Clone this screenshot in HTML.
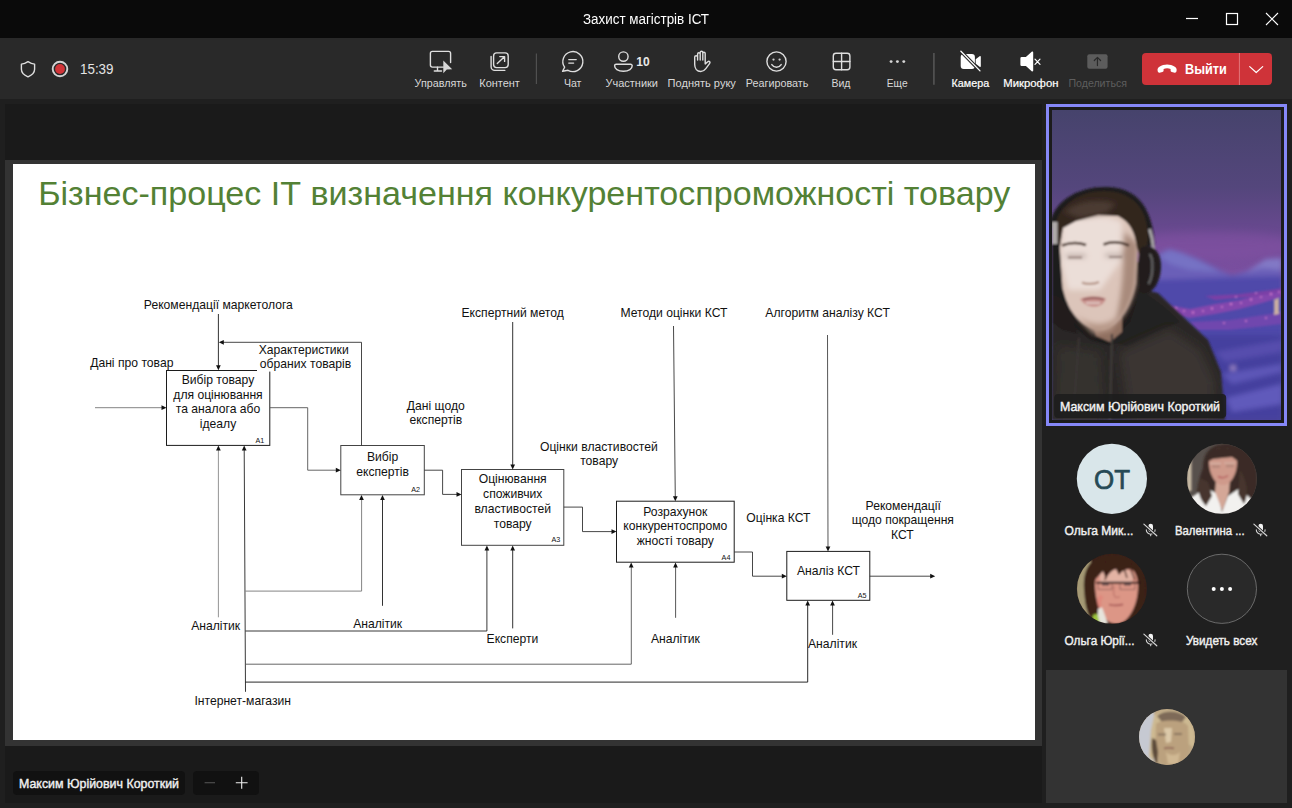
<!DOCTYPE html>
<html lang="ru">
<head>
<meta charset="utf-8">
<title>Захист магістрів ІСТ</title>
<style>
*{box-sizing:border-box;margin:0;padding:0}
html,body{width:1292px;height:808px;overflow:hidden;background:#1f1f1f;font-family:"Liberation Sans",sans-serif;color:#fff}
#titlebar{position:absolute;left:0;top:0;width:1292px;height:38px;background:#0a0a0a}
#toolbar{position:absolute;left:0;top:38px;width:1292px;height:61px;background:#292929}
#stage{position:absolute;left:5px;top:104px;width:1037px;height:699px;background:#1a1a1a}
#frame{position:absolute;left:5px;top:160px;width:1037px;height:586px;background:#333}
#slide{position:absolute;left:13px;top:164px;width:1022px;height:576px;background:#fff;overflow:hidden}
.t{position:absolute;white-space:nowrap;transform-origin:0 50%;line-height:1}
svg{position:absolute;overflow:visible}
.ic{fill:none;stroke:#dedede;stroke-width:1.4;stroke-linecap:round;stroke-linejoin:round}
.chip{position:absolute;background:#111;border-radius:4px}
#side{position:absolute;left:1042px;top:99px;width:250px;height:709px;background:#1f1f1f}
</style>
</head>
<body>
<!-- ===== window title bar ===== -->
<div id="titlebar">
  <div class="t" id="wtitle" style="left:583px;top:12px;font-size:14px;color:#fff;transform:scaleX(.957)">Захист магістрів ІСТ</div>
  <svg width="1292" height="39" style="left:0;top:0">
    <path d="M1186 18.5h12" stroke="#fff" stroke-width="1.2"/>
    <rect x="1226.5" y="13.5" width="11" height="11" fill="none" stroke="#fff" stroke-width="1.2"/>
    <path d="M1266 13l12 12M1278 13l-12 12" stroke="#fff" stroke-width="1.1"/>
  </svg>
</div>

<!-- ===== meeting toolbar ===== -->
<div id="toolbar"></div>
<svg id="tbsvg" width="1292" height="60" viewBox="0 39 1292 60" style="left:0;top:39px" font-family="Liberation Sans, sans-serif">
  <!-- shield -->
  <path class="ic" d="M28 61.6c2.2 1.5 4.3 2.3 6.6 2.5v5.2c0 3.6-2.6 5.9-6.6 7.6c-4-1.7-6.6-4-6.6-7.6v-5.2c2.3-.2 4.4-1 6.6-2.5z" stroke="#e0e0e0" stroke-width="1.1"/>
  <!-- record -->
  <circle cx="60" cy="69" r="7.300" fill="none" stroke="#d4d4d4" stroke-width="1.900"/>
  <circle cx="60" cy="69" r="4.900" fill="#d13438"/>
  <text x="80" y="74" font-size="14" fill="#e4e4e4" textLength="33.500" lengthAdjust="spacingAndGlyphs">15:39</text>

  <!-- Управлять -->
  <g class="ic" stroke="#cfcfcf" stroke-width="1.35">
    <path d="M443.5 67.1H432.4a2 2 0 0 1-2-2V53.4a2 2 0 0 1 2-2H448.6a2 2 0 0 1 2 2V62.5"/>
    <path d="M437.5 67.3V70.8M434.3 71H441.5"/>
  </g>
  <path d="M443.3 60.6L452.2 69.3L446.8 69.5L443.3 73.2Z" fill="#d6d6d6"/>
  <!-- Контент -->
  <g class="ic" stroke="#cfcfcf" stroke-width="1.3">
    <rect x="493.6" y="52.9" width="14.6" height="14.7" rx="3"/>
    <path d="M491.1 56.5V66.8a3.6 3.6 0 0 0 3.6 3.6H504.8"/>
    <path d="M497.3 63.6L504.4 56.7M499.8 56.6H504.6V61.4"/>
  </g>
  <!-- divider -->
  <path d="M536.4 53.5V84" stroke="#505050" stroke-width="1.200"/>
  <!-- Чат -->
  <g class="ic" stroke="#cfcfcf" stroke-width="1.35">
    <path d="M564.6 67.2A10 10 0 1 1 568 70.3L562.6 71.3Z"/>
    <path d="M568.8 59.6H576.2M568.8 63.1H573.6"/>
  </g>
  <!-- Участники -->
  <g class="ic" stroke="#cfcfcf" stroke-width="1.35">
    <circle cx="623.4" cy="56.6" r="4.7"/>
    <path d="M616.2 64.2H630.6a1.6 1.6 0 0 1 1.6 1.6c0 3-3.2 5.5-8.8 5.5s-8.8-2.5-8.8-5.5a1.6 1.6 0 0 1 1.6-1.6z"/>
  </g>
  <text x="636.3" y="65.6" font-size="12" font-weight="700" fill="#e8e8e8" textLength="13.4" lengthAdjust="spacingAndGlyphs">10</text>
  <!-- Поднять руку -->
  <g class="ic" stroke="#cfcfcf" stroke-width="1.25">
    <path d="M694.7 57v7.6c0 3.8 2.3 6.9 6 6.9c2.3 0 3.7-1 5.1-2.9l3.9-5.3c.9-1.2-.6-2.7-1.9-1.6l-2.6 2.2V53.6c0-1.7-2.4-1.7-2.4 0M702.8 60V52.6c0-1.8-2.6-1.8-2.6 0V60M700.2 54c0-1.7-2.6-1.7-2.6 0v6M697.6 57c0-1.7-2.9-1.7-2.9 0"/>
  </g>
  <!-- Реагировать -->
  <g class="ic" stroke="#cfcfcf" stroke-width="1.35">
    <circle cx="776.5" cy="61.5" r="9.6"/>
    <path d="M771.8 64.6c1.2 1.8 2.8 2.7 4.7 2.7s3.500-.9 4.700-2.700"/>
  </g>
  <circle cx="773.5" cy="59.6" r="1.15" fill="#cfcfcf"/><circle cx="779.6" cy="59.6" r="1.15" fill="#cfcfcf"/>
  <!-- Вид -->
  <g class="ic" stroke="#cfcfcf" stroke-width="1.35">
    <rect x="833.3" y="53.2" width="16.600" height="16.600" rx="2.700"/>
    <path d="M841.6 53.2V69.8M833.3 61.5H849.9"/>
  </g>
  <!-- Еще -->
  <g fill="#d6d6d6"><circle cx="891.1" cy="61.6" r="1.45"/><circle cx="897.4" cy="61.6" r="1.45"/><circle cx="903.8" cy="61.6" r="1.45"/></g>
  <!-- divider -->
  <path d="M933.9 53V84.800" stroke="#585858" stroke-width="1.500"/>
  <!-- Камера -->
  <g fill="#fff">
    <rect x="960.7" y="54" width="14.200" height="15" rx="3"/>
    <path d="M975.7 59.200L979.600 56.200c.6-.4 1.200-.1 1.200.6V66.200c0 .7-.6 1-1.200.6L975.7 63.800Z"/>
  </g>
  <path d="M960.900 51.300L980 70.900" stroke="#292929" stroke-width="3.400" stroke-linecap="round"/>
  <path d="M960.900 51.300L980 70.900" stroke="#fff" stroke-width="1.300" stroke-linecap="round"/>
  <!-- Микрофон (speaker muted) -->
  <path d="M1021.600 57h4.300l5.800-5.200c.6-.5 1.500-.1 1.500.7V70.500c0 .8-.9 1.200-1.500.7l-5.800-5.200h-4.300a1.200 1.200 0 0 1-1.200-1.200V58.200a1.200 1.200 0 0 1 1.200-1.200z" fill="#fff"/>
  <path d="M1035 59.200L1040 64.400M1040 59.200L1035 64.400" stroke="#fff" stroke-width="1.200" stroke-linecap="round"/>
  <!-- Поделиться -->
  <rect x="1087.300" y="54.200" width="20.300" height="14.600" rx="2" fill="#5c5c5c"/>
  <path d="M1097.450 65.600V57.600M1094.300 60.500L1097.450 57.400L1100.600 60.500" fill="none" stroke="#2a2a2a" stroke-width="1.200" stroke-linecap="round" stroke-linejoin="round"/>

  <!-- labels -->
  <g font-size="10.900" fill="#d8d8d8" lengthAdjust="spacingAndGlyphs">
    <text x="414.600" y="86.900" textLength="52.200" lengthAdjust="spacingAndGlyphs">Управлять</text>
    <text x="479.300" y="86.900" textLength="40.600" lengthAdjust="spacingAndGlyphs">Контент</text>
    <text x="563.900" y="86.900" textLength="17.600" lengthAdjust="spacingAndGlyphs">Чат</text>
    <text x="605.500" y="86.900" textLength="52.500" lengthAdjust="spacingAndGlyphs">Участники</text>
    <text x="667.600" y="86.900" textLength="68.300" lengthAdjust="spacingAndGlyphs">Поднять руку</text>
    <text x="745.800" y="86.900" textLength="62.500" lengthAdjust="spacingAndGlyphs">Реагировать</text>
    <text x="831.500" y="86.900" textLength="19" lengthAdjust="spacingAndGlyphs">Вид</text>
    <text x="886.800" y="86.900" textLength="20.800" lengthAdjust="spacingAndGlyphs">Еще</text>
    <text x="951.600" y="86.900" textLength="37.600" fill="#fff" stroke="#fff" stroke-width=".2" lengthAdjust="spacingAndGlyphs">Камера</text>
    <text x="1003.300" y="86.900" textLength="55.200" fill="#fff" stroke="#fff" stroke-width=".2" lengthAdjust="spacingAndGlyphs">Микрофон</text>
    <text x="1068.400" y="86.900" textLength="58.600" fill="#5e5e5e" lengthAdjust="spacingAndGlyphs">Поделиться</text>
  </g>

  <!-- leave button -->
  <rect x="1142" y="53" width="130" height="32" rx="4" fill="#cf3339"/>
  <path d="M1239.400 53V85" stroke="#e2777b" stroke-width="1"/>
  <path d="M1157.600 70.600c-.3-1.500.3-2.900 1.800-3.900c4.600-2.900 10.800-2.900 15.400 0c1.500 1 2.100 2.400 1.800 3.900l-.2 1c-.2.800-.9 1.300-1.700 1.100l-2.900-.6c-.7-.2-1.200-.8-1.200-1.500v-1.600c-2.300-.9-4.700-.9-7 0v1.600c0 .7-.5 1.300-1.200 1.500l-2.900.6c-.8.200-1.500-.3-1.700-1.100z" fill="#fff"/>
  <text x="1185" y="73.600" font-size="13.800" font-weight="700" fill="#fff" textLength="41.800" lengthAdjust="spacingAndGlyphs">Выйти</text>
  <path d="M1249.700 66.600L1256.200 72.500L1262.700 66.600" fill="none" stroke="#fff" stroke-width="1.200" stroke-linecap="round" stroke-linejoin="round"/>
</svg>

<!-- ===== stage with shared slide ===== -->
<div id="stage"></div>
<div id="frame"></div>
<div id="slide">
<svg width="1022" height="576" viewBox="13 164 1022 576" style="left:0;top:0" font-family="Liberation Sans, sans-serif">
  <defs>
    <path id="ah" d="M0 0L-5 -2.35L-5 2.35Z"/>
  </defs>
  <text x="38.2" y="205" font-size="34.07" fill="#538135" id="stitle">Бізнес-процес ІТ визначення конкурентоспроможності товару</text>

  <!-- boxes -->
  <g fill="#fff" stroke="#1c1c1c" stroke-width="1">
    <rect x="166.5" y="370.5" width="103.3" height="74.9"/>
    <rect x="340.8" y="445.5" width="83.5" height="49.3" stroke="#444"/>
    <rect x="461.5" y="469.5" width="102.3" height="75.8" stroke="#444"/>
    <rect x="616.5" y="501.2" width="117.7" height="61"/>
    <rect x="786.8" y="551.4" width="83" height="48.9"/>
  </g>
  <rect x="257" y="346" width="96" height="25.6" fill="#fff"/>

  <!-- connectors -->
  <g fill="none" stroke="#1c1c1c" stroke-width=".9">
    <path d="M218.4 314V368"/>
    <path d="M361.5 445.5V342.3H222" stroke="#333"/>
    <path d="M95 407.7H164" stroke="#777"/>
    <path d="M270 407.7H307.7V470.2H338" stroke="#555"/>
    <path d="M424.3 470.2H442.6V494.4H459" stroke="#333"/>
    <path d="M563.8 507.1H582.5V531.6H614" stroke="#333"/>
    <path d="M734.2 552H752.5V576.2H784" stroke="#333"/>
    <path d="M869.8 576.2H932" stroke="#333"/>
    <path d="M512.7 322V467"/>
    <path d="M673.5 326L675.3 499" stroke="#333"/>
    <path d="M827.5 335L828 549" stroke="#444"/>
    <path d="M218.4 617.3V448" stroke="#888"/>
    <path d="M245.5 691.8L244.2 448" stroke="#222"/>
    <path d="M245.3 591.1H361.6V498" stroke="#777"/>
    <path d="M382.5 605.8V498"/>
    <path d="M245.4 631H486.9V548" stroke="#222"/>
    <path d="M512.7 628.4V548"/>
    <path d="M245.5 664.2H631.3V565" stroke="#555"/>
    <path d="M675.6 617.8V565" stroke="#444"/>
    <path d="M245.5 682.1H807.7V603" stroke="#111"/>
    <path d="M832.6 634.8V603" stroke="#333"/>
  </g>
  <!-- arrow heads -->
  <g fill="#111">
    <use href="#ah" transform="translate(218.4 370.3) rotate(90)"/>
    <use href="#ah" transform="translate(218.8 342.3) rotate(180)"/>
    <use href="#ah" transform="translate(166.5 407.7)"/>
    <use href="#ah" transform="translate(340.8 470.2)"/>
    <use href="#ah" transform="translate(461.5 494.4)"/>
    <use href="#ah" transform="translate(616.5 531.6)"/>
    <use href="#ah" transform="translate(786.8 576.2)"/>
    <use href="#ah" transform="translate(935.2 576.2)"/>
    <use href="#ah" transform="translate(512.7 469.5) rotate(90)"/>
    <use href="#ah" transform="translate(675.3 501.2) rotate(90)"/>
    <use href="#ah" transform="translate(828 551.4) rotate(90)"/>
    <use href="#ah" transform="translate(218.4 445.6) rotate(-90)"/>
    <use href="#ah" transform="translate(244.2 445.6) rotate(-90)"/>
    <use href="#ah" transform="translate(361.5 495) rotate(-90)"/>
    <use href="#ah" transform="translate(382.5 495) rotate(-90)"/>
    <use href="#ah" transform="translate(486.9 545.5) rotate(-90)"/>
    <use href="#ah" transform="translate(512.7 545.5) rotate(-90)"/>
    <use href="#ah" transform="translate(631.2 562.4) rotate(-90)"/>
    <use href="#ah" transform="translate(675.5 562.4) rotate(-90)"/>
    <use href="#ah" transform="translate(807.7 600.5) rotate(-90)"/>
    <use href="#ah" transform="translate(832.5 600.5) rotate(-90)"/>
  </g>

  <!-- text -->
  <g font-size="12.15" fill="#111" text-anchor="middle">
    <text x="218" y="384.2">Вибір товару</text>
    <text x="218" y="398.7">для оцінювання</text>
    <text x="218" y="413.3">та аналога або</text>
    <text x="218" y="428.3">ідеалу</text>
    <text x="382.6" y="461.2">Вибір</text>
    <text x="382.6" y="475.9">експертів</text>
    <text x="512.7" y="483.3">Оцінювання</text>
    <text x="512.7" y="498.2">споживчих</text>
    <text x="512.7" y="512.9">властивостей</text>
    <text x="512.7" y="527.6">товару</text>
    <text x="675.3" y="515.5">Розрахунок</text>
    <text x="675.3" y="530.1">конкурентоспромо</text>
    <text x="675.3" y="544.7">жності товару</text>
    <text x="828.5" y="574.6">Аналіз КСТ</text>

    <text x="218.35" y="309.1">Рекомендації маркетолога</text>
    <text x="303.7" y="354">Характеристики</text>
    <text x="305.5" y="368.1">обраних товарів</text>
    <text x="131.8" y="366.9">Дані про товар</text>
    <text x="435.8" y="410.3">Дані щодо</text>
    <text x="435.8" y="424.4">експертів</text>
    <text x="512.65" y="316.6">Експертний метод</text>
    <text x="673.95" y="316.6">Методи оцінки КСТ</text>
    <text x="827.6" y="316.6">Алгоритм аналізу КСТ</text>
    <text x="598.85" y="450.5">Оцінки властивостей</text>
    <text x="599.15" y="465.2">товару</text>
    <text x="778.4" y="521.7">Оцінка КСТ</text>
    <text x="903.2" y="510.2">Рекомендації</text>
    <text x="902.8" y="524.3">щодо покращення</text>
    <text x="902.4" y="538.8">КСТ</text>
    <text x="215.65" y="630.4">Аналітик</text>
    <text x="377.65" y="628.4">Аналітик</text>
    <text x="512.45" y="642.9">Експерти</text>
    <text x="675.45" y="642.9">Аналітик</text>
    <text x="832.5" y="647.9">Аналітик</text>
    <text x="242.7" y="704.8">Інтернет-магазин</text>
  </g>
  <g font-size="7.2" fill="#111" text-anchor="end">
    <text x="264.2" y="442.5">A1</text>
    <text x="420.1" y="492">A2</text>
    <text x="560.2" y="542.3">A3</text>
    <text x="730.4" y="559.5">A4</text>
    <text x="866.6" y="597.7">A5</text>
  </g>
</svg>
</div>

<!-- ===== bottom chips ===== -->
<div class="chip" style="left:13px;top:771px;width:172px;height:24px"></div>
<div class="chip" style="left:193px;top:771px;width:66px;height:24px"></div>

<!-- ===== right side panel ===== -->
<svg id="chipsvg" width="270" height="30" viewBox="0 768 270 30" style="left:0;top:768px" font-family="Liberation Sans, sans-serif">
  <text x="19" y="788.100" font-size="12.800" fill="#f0f0f0" stroke="#f0f0f0" stroke-width=".4" textLength="160" lengthAdjust="spacingAndGlyphs">Максим Юрійович Короткий</text>
  <path d="M204.600 782.700H215" stroke="#4d4d4d" stroke-width="1.200"/>
  <path d="M235.800 782.700H247.600M241.700 776.700V788.700" stroke="#f0f0f0" stroke-width="1.100"/>
</svg>

<div id="side"></div>
<svg id="sidesvg" width="250" height="709" viewBox="1042 99 250 709" style="left:1042px;top:99px" font-family="Liberation Sans, sans-serif">
  <defs>
    <linearGradient id="sky" x1="0" y1="0" x2="0" y2="1">
      <stop offset="0" stop-color="#46436c"/>
      <stop offset=".25" stop-color="#54467c"/>
      <stop offset=".42" stop-color="#6c4993"/>
      <stop offset=".52" stop-color="#7b4fa0"/>
      <stop offset=".62" stop-color="#5a55b0"/>
      <stop offset=".8" stop-color="#4a4a9e"/>
      <stop offset="1" stop-color="#4c4898"/>
    </linearGradient>
    <clipPath id="vclip"><rect x="1052" y="110" width="229" height="310"/></clipPath>
    <filter id="b1" x="-20%" y="-20%" width="140%" height="140%"><feGaussianBlur stdDeviation="1.200"/></filter>
    <filter id="b2" x="-20%" y="-20%" width="140%" height="140%"><feGaussianBlur stdDeviation="2.500"/></filter>
    <filter id="b4" x="-30%" y="-30%" width="160%" height="160%"><feGaussianBlur stdDeviation="5"/></filter>
    <clipPath id="c2"><circle cx="1221.900" cy="478.800" r="35"/></clipPath>
    <clipPath id="c3"><circle cx="1111.900" cy="588.800" r="35"/></clipPath>
    <clipPath id="c4"><circle cx="1167" cy="737" r="28"/></clipPath>
    <g id="micoff">
      <path d="M-2.300 -4a2.300 2.300 0 0 1 4.600 0v3.700a2.300 2.300 0 0 1-4.600 0z" fill="#f2f2f2"/>
      <path d="M-4.400 -.2a4.400 4.400 0 0 0 8.800 0M0 4.200V5.800" fill="none" stroke="#d8d8d8" stroke-width="1.100" stroke-linecap="round"/>
      <path d="M-6.200 -5.400L6.600 6.300" stroke="#1f1f1f" stroke-width="2.800"/>
      <path d="M-6.800 -5.900L6.100 5.800" stroke="#d4d4d4" stroke-width="1.200" stroke-linecap="round"/>
    </g>
  </defs>

  <!-- active speaker tile -->
  <rect x="1047.500" y="105.500" width="238" height="319" fill="#1c1c1c" stroke="#8688f8" stroke-width="3"/>
  <g clip-path="url(#vclip)">
    <rect x="1052" y="110" width="229" height="310" fill="url(#sky)"/>
    <g id="bgscene">
      <!-- far glow -->
      <ellipse cx="1210" cy="246" rx="90" ry="14" fill="#8a55a8" opacity=".45" filter="url(#b4)"/>
      <!-- mountains -->
      <g filter="url(#b2)">
        <path d="M1150 262L1160 253L1169 249L1180 252L1196 258L1212 266L1232 276L1250 270L1266 259L1274 262L1282 258V330H1150Z" fill="#6a5fb8"/>
        <path d="M1158 256L1169 249.500L1182 253L1200 261L1220 272L1190 270L1170 264Z" fill="#7672c4"/>
        <path d="M1246 272L1266 259L1282 258V270L1262 268Z" fill="#8279c6"/>
        <path d="M1150 280L1282 276V340H1150Z" fill="#5048aa"/>
      </g>
      <!-- town lights -->
      <g filter="url(#b1)">
        <path d="M1168 305L1190 309L1215 304L1240 300L1262 294L1282 290V297L1262 303L1240 309L1215 314L1190 318L1168 313Z" fill="#8346ad"/>
        <path d="M1205 296L1240 294L1270 290L1282 288V292L1250 297L1215 300Z" fill="#7a3fa6"/>
        <path d="M1190 322L1230 320L1282 312V324L1230 330L1196 330Z" fill="#6f46ae"/>
        <g fill="#d67fd0" opacity=".85">
          <circle cx="1176" cy="308" r="1.200"/><circle cx="1184" cy="311" r="1"/><circle cx="1193" cy="312.500" r="1.300"/><circle cx="1203" cy="311" r="1"/>
          <circle cx="1212" cy="308.500" r="1.200"/><circle cx="1222" cy="307" r="1"/><circle cx="1231" cy="304" r="1.300"/><circle cx="1241" cy="303" r="1"/>
          <circle cx="1251" cy="299.500" r="1.200"/><circle cx="1261" cy="297" r="1"/><circle cx="1271" cy="294" r="1.300"/><circle cx="1279" cy="292" r="1"/>
          <circle cx="1236" cy="297" r="1"/><circle cx="1256" cy="293" r="1"/><circle cx="1224" cy="323" r="1"/><circle cx="1246" cy="321" r="1.100"/><circle cx="1266" cy="318" r="1"/>
        </g>
        <path d="M1274 300l5-2v16l-5 1z" fill="#e6c7a0" opacity=".8"/>
      </g>
      <!-- foreground valley -->
      <g filter="url(#b2)">
        <path d="M1150 335H1282V420H1150Z" fill="#453f9f"/>
        <path d="M1215 352L1282 340V352L1225 362Z" fill="#6054b4" opacity=".7"/>
        <path d="M1222 374L1282 364V372L1232 384Z" fill="#6e68c8" opacity=".6"/>
        <path d="M1226 398L1282 384V404L1232 412Z" fill="#6c66c8" opacity=".7"/>
        <circle cx="1233" cy="368" r="2" fill="#d9b8e8"/>
      </g>
    </g>
    <g id="person" filter="url(#b1)">
      <!-- headband -->
      <path d="M1053 228C1056 204 1080 190 1108 191C1134 192 1148 208 1151 246" fill="none" stroke="#1d1a1b" stroke-width="8"/>
      <path d="M1149.500 229C1152 236 1153 242 1153.500 249" fill="none" stroke="#a9a6a8" stroke-width="3"/>
      <!-- hoodie -->
      <path d="M1052 250L1062 250L1066 300L1110 340L1132 322L1138 270L1146 290L1158 293L1178 312L1208 340L1221 372L1225 420H1052Z" fill="#2b2827"/>
      <path d="M1058 262L1140 262L1142 292L1128 330L1112 346L1090 340L1068 322L1060 296Z" fill="#1f1c1b"/>
      <path d="M1140 290C1150 296 1168 308 1180 322L1160 330L1128 346L1110 342L1130 322Z" fill="#242120"/>
      <path d="M1052 292L1066 304L1078 334L1062 330L1052 322Z" fill="#211e1d"/>
      <path d="M1120 352L1170 330L1200 350L1214 380L1216 420H1130Z" fill="#3a3532" filter="url(#b4)"/>
      <path d="M1058 346L1100 352L1104 420H1056Z" fill="#34302e" filter="url(#b4)"/>
      <!-- neck -->
      <path d="M1092 322L1122 312L1122 332L1110 342L1096 336Z" fill="#8f6f60"/>
      <!-- face -->
      <path d="M1059 232C1059 214 1078 208 1098 208C1120 208 1138 218 1138 244L1136 283C1133 302 1121 326 1104 330C1088 333 1072 316 1067 302C1063 294 1059 284 1059 276Z" fill="#dcc5ba"/>
      <g filter="url(#b2)">
        <path d="M1062 224C1078 214 1106 214 1122 222L1120 262L1100 290L1068 290L1061 262Z" fill="#ebded8"/>
        <path d="M1124 232L1138 244L1136 284C1133 300 1126 316 1114 326C1122 300 1124 270 1124 232Z" fill="#a88a7b"/>
        <path d="M1072 312C1086 326 1106 328 1118 316L1112 330L1094 334Z" fill="#b59686"/>
        <path d="M1066 256h20M1105 255.500h20" stroke="#9a857f" stroke-width="4" opacity=".55"/>
      </g>
      <!-- hair -->
      <path d="M1054 236C1054 206 1078 191 1104 191C1132 191 1149 208 1148 240L1143 264L1137 248C1135 232 1130 222 1118 216L1098 215L1076 221L1063 228L1060 246L1057 252Z" fill="#33261f"/>
      <path d="M1064 212C1078 200 1100 198 1116 204L1106 213L1080 218Z" fill="#57443a" opacity=".7" filter="url(#b2)"/>
      <!-- left ear pad -->
      <path d="M1052 222h5.500v22H1052z" fill="#aeaaa9"/>
      <path d="M1052 244h7.500l3 44l4 14l-14.500 -8z" fill="#1f1c1c"/>
      <!-- right ear cup -->
      <path d="M1141 248C1150 242 1161 250 1161 266C1161 282 1152 296 1142 293C1137 280 1137 260 1141 248Z" fill="#201e1f"/>
      <path d="M1149.500 254C1153.500 258 1153.500 276 1148.500 284" fill="none" stroke="#5d5b5c" stroke-width="2.500"/>
      <!-- brows, eyes, nose, mouth -->
      <path d="M1062 245.500C1070 242.500 1079 242.500 1086 245" fill="none" stroke="#4a362c" stroke-width="2.600"/>
      <path d="M1103.500 244.500C1111 241.500 1121 242 1129 245.500" fill="none" stroke="#4a362c" stroke-width="2.600"/>
      <path d="M1068 257.500h14M1109 257h13" stroke="#85706a" stroke-width="1.800" opacity=".8"/>
      <path d="M1082 282.500C1086 284.500 1094 284.500 1099 282" fill="none" stroke="#b69587" stroke-width="2.200"/>
      <path d="M1080 299C1087 295.500 1098 295.500 1106 298.500C1103 309 1087 310 1080 299Z" fill="#c9928d"/>
      <path d="M1083 299.500C1090 297.500 1098 297.500 1104 299.500" fill="none" stroke="#8b5554" stroke-width="1.800"/>
      <path d="M1086 303h14" stroke="#e3cfc9" stroke-width="2" opacity=".8"/>
      <!-- drawstrings -->
      <path d="M1112 334L1110 420" stroke="#403c3a" stroke-width="2"/>
      <path d="M1079 338L1074 406" stroke="#3a3634" stroke-width="2"/>
    </g>
  </g>
  <rect x="1054.200" y="394" width="172" height="24" rx="4" fill="#1d1d1d" fill-opacity=".9"/>
  <text x="1060" y="411" font-size="12.800" fill="#f2f2f2" stroke="#f2f2f2" stroke-width=".4" textLength="160" lengthAdjust="spacingAndGlyphs">Максим Юрійович Короткий</text>

  <!-- participants -->
  <circle cx="1111.900" cy="478.800" r="35.100" fill="#d9e6ea"/>
  <text x="1094" y="488.800" font-size="27.700" fill="#264955" stroke="#264955" stroke-width=".7" textLength="36" lengthAdjust="spacingAndGlyphs">ОТ</text>
  <g clip-path="url(#c2)" id="av2">
    <rect x="1186" y="443" width="72" height="72" fill="#57504c"/>
    <g filter="url(#b1)">
      <path d="M1187 455h4.500v36h-4.500z" fill="#c9bba4"/>
      <path d="M1203 468C1203 452 1212 444 1226 444C1244 444 1255 454 1257 472C1259 488 1256 500 1248 507L1232 512L1206 512C1193 504 1196 486 1203 468Z" fill="#3a2c26"/>
      <path d="M1190 498L1206 488L1218 494L1222 512L1228 496L1240 488L1252 500L1250 515H1192Z" fill="#f2f1ef"/>
      <path d="M1216 480L1230 480L1229 492L1222.500 511L1215 492Z" fill="#d4a797"/>
      <path d="M1209 462C1209 452 1216 448 1223 448C1231 448 1237 452 1237 462C1237 474 1231 485 1223 485C1215 485 1209 474 1209 462Z" fill="#cf9a8b"/>
      <path d="M1207 462C1208 451 1218 447 1226 448C1234 449 1238 453 1239 462L1232 457L1222 458L1213 459Z" fill="#3a2c26"/>
      <path d="M1210 463.500h11M1224 463h11" stroke="#dccabd" stroke-width="1" opacity=".7"/>
      <path d="M1212 466.500h8M1226 466h8" stroke="#a07a70" stroke-width="2.500" opacity=".55"/>
      <path d="M1218 476.500C1221 478 1225 478 1228 475.500" fill="none" stroke="#b6605f" stroke-width="1.500"/>
      <path d="M1200 478C1196 490 1200 500 1206 506L1212 496L1208 482Z" fill="#46362e"/>
      <path d="M1240 470C1246 480 1250 492 1244 504L1238 494Z" fill="#46362e"/>
    </g>
  </g>
  <g clip-path="url(#c3)" id="av3">
    <rect x="1076" y="553" width="72" height="72" fill="#3a2019"/>
    <g filter="url(#b1)">
      <path d="M1076 560h15v60h-15z" fill="#a59a74"/>
      <path d="M1084 590C1082 566 1094 554 1112 554C1132 554 1146 566 1146 588C1146 606 1140 616 1134 622L1094 624C1086 614 1085 602 1084 590Z" fill="#3b2018"/>
      <path d="M1095 584C1095 570 1103 563 1116 563C1130 563 1138 572 1138 586C1138 606 1128 624 1116 624C1104 624 1095 606 1095 584Z" fill="#dc9686"/>
      <path d="M1100 572C1106 566 1126 566 1134 574L1132 582L1100 582Z" fill="#e3b3a4"/>
      <path d="M1095 580C1097 566 1106 559 1116 558C1128 558 1137 566 1141 580L1134 571C1128 567 1122 570 1119 575L1116 569C1112 570 1108 574 1106 579L1103 571Z" fill="#3b2018"/>
      <path d="M1108 568L1105 580M1124 568L1127 578M1131 570L1135 580" stroke="#3b2018" stroke-width="1.500" opacity=".8"/>
      <path d="M1096 582.800H1141" stroke="#2c1a18" stroke-width="2"/>
      <path d="M1098 583v6.500h14v-6.500M1120 583v6.500h15v-6.500" fill="none" stroke="#6b4a46" stroke-width=".8" opacity=".8"/>
      <path d="M1102 584.500h7M1124 584.500h7" stroke="#5d4a4a" stroke-width="2"/>
      <path d="M1114 586C1113 592 1113 596 1116 597.500L1120 597" fill="none" stroke="#c47c70" stroke-width="1.600"/>
      <path d="M1109 604.500C1113 605.500 1119 605.500 1123 604.300" fill="none" stroke="#a85a58" stroke-width="1.800"/>
      <path d="M1102 596C1098 600 1098 606 1102 610" fill="none" stroke="#e76f66" stroke-width="4" opacity=".35"/>
      <path d="M1098 609L1102 607L1108 624H1098Z" fill="#e6e4dc"/>
      <path d="M1093 615L1097.500 613.500L1100 625H1092Z" fill="#9dc43c"/>
    </g>
  </g>
  <circle cx="1221.900" cy="588.800" r="34.600" fill="#292929" stroke="#6a6a6a" stroke-width="1"/>
  <g fill="#fff"><circle cx="1213.700" cy="588.900" r="2"/><circle cx="1221.900" cy="588.900" r="2"/><circle cx="1230.100" cy="588.900" r="2"/></g>

  <g font-size="12" fill="#f0f0f0" stroke="#f0f0f0" stroke-width=".4">
    <text x="1064.600" y="534.800" textLength="68.800" lengthAdjust="spacingAndGlyphs">Ольга Мик...</text>
    <text x="1175" y="534.800" textLength="69.600" lengthAdjust="spacingAndGlyphs">Валентина ...</text>
    <text x="1064.600" y="644.800" textLength="70" lengthAdjust="spacingAndGlyphs">Ольга Юрії...</text>
    <text x="1186" y="644.800" textLength="71.300" lengthAdjust="spacingAndGlyphs">Увидеть всех</text>
  </g>
  <use href="#micoff" transform="translate(1150.700 530)"/>
  <use href="#micoff" transform="translate(1260.700 530)"/>
  <use href="#micoff" transform="translate(1150.700 640)"/>

  <!-- self view -->
  <rect x="1046" y="670" width="241" height="133" fill="#333"/>
  <g clip-path="url(#c4)" id="av4">
    <rect x="1138" y="708" width="58" height="58" fill="#bca684"/>
    <g filter="url(#b1)">
      <path d="M1138 708h16v58h-16z" fill="#c6c9d2"/>
      <path d="M1154 716C1160 709 1178 708 1188 716L1194 730L1195 748L1188 744L1186 724L1160 722L1156 740L1153 762L1149 756L1151 730Z" fill="#cdb992"/>
      <path d="M1157 716C1164 710 1178 710 1186 717L1182 722L1162 722Z" fill="#7e6a58"/>
      <path d="M1156 724C1160 719 1184 719 1188 726L1189 750C1186 760 1178 766 1170 766C1162 766 1157 758 1155 748Z" fill="#bba17e"/>
      <path d="M1164 728L1172 728L1171 742L1166 743Z" fill="#dcc9a9"/>
      <path d="M1158 734.500h8M1174 734h8" stroke="#7d6a58" stroke-width="1.800" opacity=".8"/>
      <path d="M1164 748.500C1167 747.500 1171 747.500 1174 748.500" fill="none" stroke="#8a5d52" stroke-width="1.500"/>
      <path d="M1152 738C1151 748 1152 758 1157 764L1158 752L1156 740Z" fill="#5d4b3b"/>
      <path d="M1166 752C1170 756 1176 756 1180 752L1178 764H1168Z" fill="#d6be98" opacity=".8"/>
    </g>
  </g>
</svg>

</body>
</html>
